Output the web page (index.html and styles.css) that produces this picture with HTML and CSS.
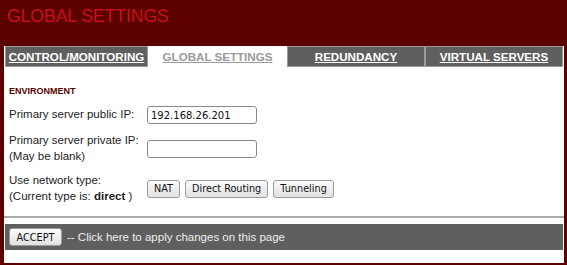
FILE: index.html
```html
<!DOCTYPE html>
<html lang="en">
<head>
    <meta charset="UTF-8">
    <title>Global Settings</title>
    <link rel="stylesheet" href="styles.css">
</head>
<body>
    <div class="page-title">GLOBAL SETTINGS</div>

    <div class="panel">
        <div class="tabs">
            <a class="tab" href="#">CONTROL/MONITORING</a>
            <a class="tab active" href="#">GLOBAL SETTINGS</a>
            <a class="tab" href="#">REDUNDANCY</a>
            <a class="tab" href="#">VIRTUAL SERVERS</a>
        </div>

        <div class="content">
            <div class="section-label">ENVIRONMENT</div>

            <div class="form-row">
                <div class="label">Primary server public IP:</div>
                <input type="text" class="field" value="192.168.26.201">
            </div>

            <div class="form-row">
                <div class="label">Primary server private IP:<br>(May be blank)</div>
                <input type="text" class="field">
            </div>

            <div class="form-row">
                <div class="label">Use network type:<br>(Current type is: <b>direct</b> )</div>
                <div class="buttons">
                    <button class="btn">NAT</button>
                    <button class="btn">Direct Routing</button>
                    <button class="btn">Tunneling</button>
                </div>
            </div>
        </div>

        <hr class="divider">

        <div class="action-bar">
            <button class="btn accept">ACCEPT</button>
            <span>-- Click here to apply changes on this page</span>
        </div>
    </div>
</body>
</html>
```

FILE: styles.css
```css
* {
    margin: 0;
    padding: 0;
    box-sizing: border-box;
}

body {
    background: #5c0000;
    font-family: "Liberation Sans", Arial, sans-serif;
    font-size: 11.5px;
    color: #222;
}

.page-title {
    height: 46px;
    padding: 6px 0 0 7px;
    color: #c8101a;
    font-size: 17.5px;
    line-height: 20px;
}

.panel {
    margin-left: 4px;
    width: 560px;
    height: 217px;
    background: white;
    display: flex;
    flex-direction: column;
}

.tabs {
    display: grid;
    grid-template-columns: 143px 139px 138px 138px;
    padding: 0 1px 0 1px;
}

.tab {
    display: block;
    height: 21px;
    line-height: 19px;
    text-align: center;
    background: #5f5f5f;
    border: 1px solid #9a9a9a;
    color: white;
    font-weight: bold;
    font-size: 11.6px;
    text-decoration: underline;
}

.tab.active {
    background: white;
    border-color: white;
    color: #9a9a9a;
}

.content {
    padding: 19px 0 0 5px;
}

.section-label {
    font-size: 9px;
    font-weight: bold;
    color: #5c0000;
    margin-bottom: 10px;
}

.form-row {
    display: flex;
    align-items: center;
    margin-bottom: 9px;
    line-height: 15.5px;
}

.label {
    width: 138px;
}

.field {
    width: 110px;
    height: 18px;
    border: 1px solid #888;
    border-radius: 3px;
    padding: 0 3px;
    font-family: "DejaVu Sans", sans-serif;
    font-size: 10px;
    color: #111;
}

.buttons {
    display: flex;
    gap: 5px;
}

.btn {
    height: 18px;
    padding: 0 6px;
    border: 1px solid #9a9a9a;
    border-radius: 3px;
    background: linear-gradient(#fbfbfb, #e2e2e2);
    font-family: "DejaVu Sans", sans-serif;
    font-size: 9.7px;
    color: #111;
}

.divider {
    border: none;
    border-top: 2px solid #aaa;
    margin-top: auto;
}

.action-bar {
    margin: 6px 1px 13px 1px;
    height: 26px;
    background: #5f5f5f;
    display: flex;
    align-items: center;
    padding-left: 4px;
    gap: 5px;
    color: #eee;
    font-size: 11.5px;
}

.accept {
    width: 53px;
    padding: 0;
}
```
